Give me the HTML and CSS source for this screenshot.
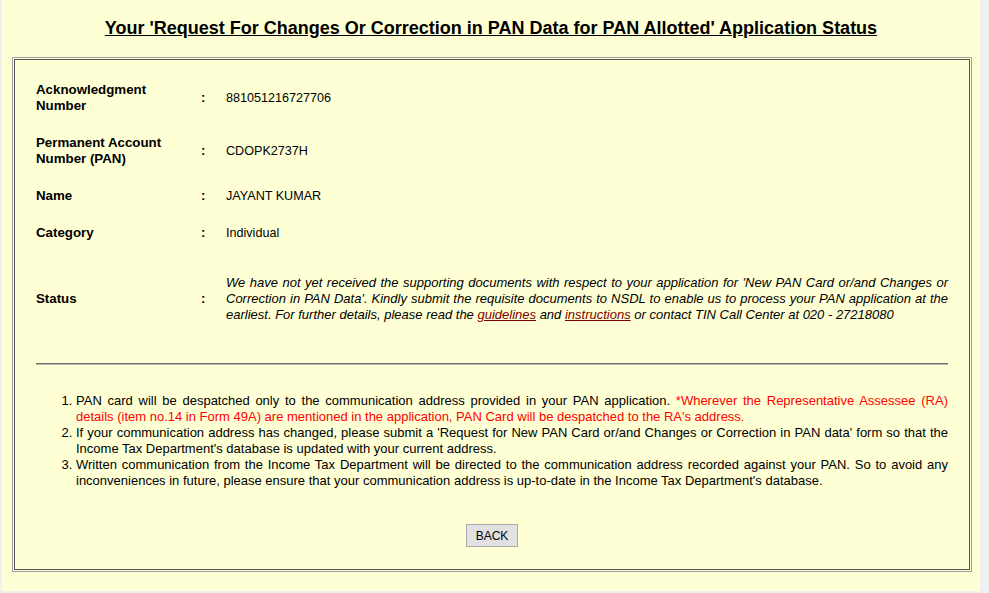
FILE: index.html
```html
<!DOCTYPE html>
<html>
<head>
<meta charset="utf-8">
<title>PAN Application Status</title>
<link rel="stylesheet" href="styles.css">
</head>
<body>
<div class="page">
  <h1 class="title">Your 'Request For Changes Or Correction in PAN Data for PAN Allotted' Application Status</h1>
  <div class="frame">
    <div class="frame-inner">
      <table class="info">
        <tr>
          <td class="label">Acknowledgment Number</td>
          <td class="colon">:</td>
          <td class="value">881051216727706</td>
        </tr>
        <tr>
          <td class="label">Permanent Account Number (PAN)</td>
          <td class="colon">:</td>
          <td class="value">CDOPK2737H</td>
        </tr>
        <tr>
          <td class="label">Name</td>
          <td class="colon">:</td>
          <td class="value">JAYANT KUMAR</td>
        </tr>
        <tr>
          <td class="label">Category</td>
          <td class="colon">:</td>
          <td class="value">Individual</td>
        </tr>
        <tr class="status-row">
          <td class="label">Status</td>
          <td class="colon">:</td>
          <td class="value status">We have not yet received the supporting documents with respect to your application for 'New PAN Card or/and Changes or Correction in PAN Data'. Kindly submit the requisite documents to NSDL to enable us to process your PAN application at the earliest. For further details, please read the <a href="#" class="link">guidelines</a> and <a href="#" class="link">instructions</a> or contact TIN Call Center at 020 - 27218080</td>
        </tr>
      </table>
      <div class="rule"></div>
      <ol class="notes">
        <li>PAN card will be despatched only to the communication address provided in your PAN application. <span class="red">*Wherever the Representative Assessee (RA) details (item no.14 in Form 49A) are mentioned in the application, PAN Card will be despatched to the RA's address.</span></li>
        <li>If your communication address has changed, please submit a 'Request for New PAN Card or/and Changes or Correction in PAN data' form so that the Income Tax Department's database is updated with your current address.</li>
        <li>Written communication from the Income Tax Department will be directed to the communication address recorded against your PAN. So to avoid any inconveniences in future, please ensure that your communication address is up-to-date in the Income Tax Department's database.</li>
      </ol>
      <div class="actions">
        <button type="button" class="btn">BACK</button>
      </div>
    </div>
  </div>
</div>
</body>
</html>
```
FILE: styles.css
```css
html, body {
  margin: 0;
  padding: 0;
}
body {
  background: #f0f0f0;
  font-family: "Liberation Sans", Arial, sans-serif;
  color: #000;
}
.page {
  margin-left: 2px;
  width: 978px;
  height: 591px;
  background: #ffffd5;
  overflow: hidden;
  box-sizing: border-box;
  padding-top: 17px;
}
.title {
  margin: 0 0 18px 0;
  font-size: 18px;
  line-height: 22px;
  font-weight: bold;
  text-align: center;
  text-decoration: underline;
}
.frame {
  margin-left: 10px;
  width: 960px;
  box-sizing: border-box;
  border: 1px solid #a0a0a0;
  padding: 1px;
}
.frame-inner {
  border: 1px solid #555555;
  padding: 11px 21px 22px 21px;
}
.info {
  border-collapse: collapse;
  width: 100%;
}
.info td {
  padding: 10.5px 0;
  vertical-align: middle;
  line-height: 16px;
}
.info .status-row td {
  padding: 24px 0;
}
.label {
  width: 155px;
  font-weight: bold;
  font-size: 13.3px;
}
.colon {
  width: 35px;
  box-sizing: border-box;
  padding-left: 10px !important;
  font-weight: bold;
  font-size: 13px;
}
.value {
  font-size: 12.6px;
}
.status {
  font-size: 13px;
  font-style: italic;
  text-align: justify;
}
.link {
  color: #800000;
  text-decoration: underline;
}
.rule {
  margin-top: 16px;
  height: 0;
  border-top: 1px solid #707070;
  border-bottom: 1px solid #b8b8a8;
}
.notes {
  margin: 28px 0 0 0;
  padding-left: 40px;
  font-size: 13px;
  line-height: 16px;
  text-align: justify;
}
.red {
  color: #ff0000;
}
.actions {
  margin-top: 35px;
  text-align: center;
  line-height: 0;
}
.btn {
  width: 52px;
  height: 23px;
  padding: 0;
  background: #e1e1e1;
  border: 1px solid #adadad;
  border-radius: 0;
  font-family: "Liberation Sans", Arial, sans-serif;
  font-size: 12px;
  color: #000;
}
```
